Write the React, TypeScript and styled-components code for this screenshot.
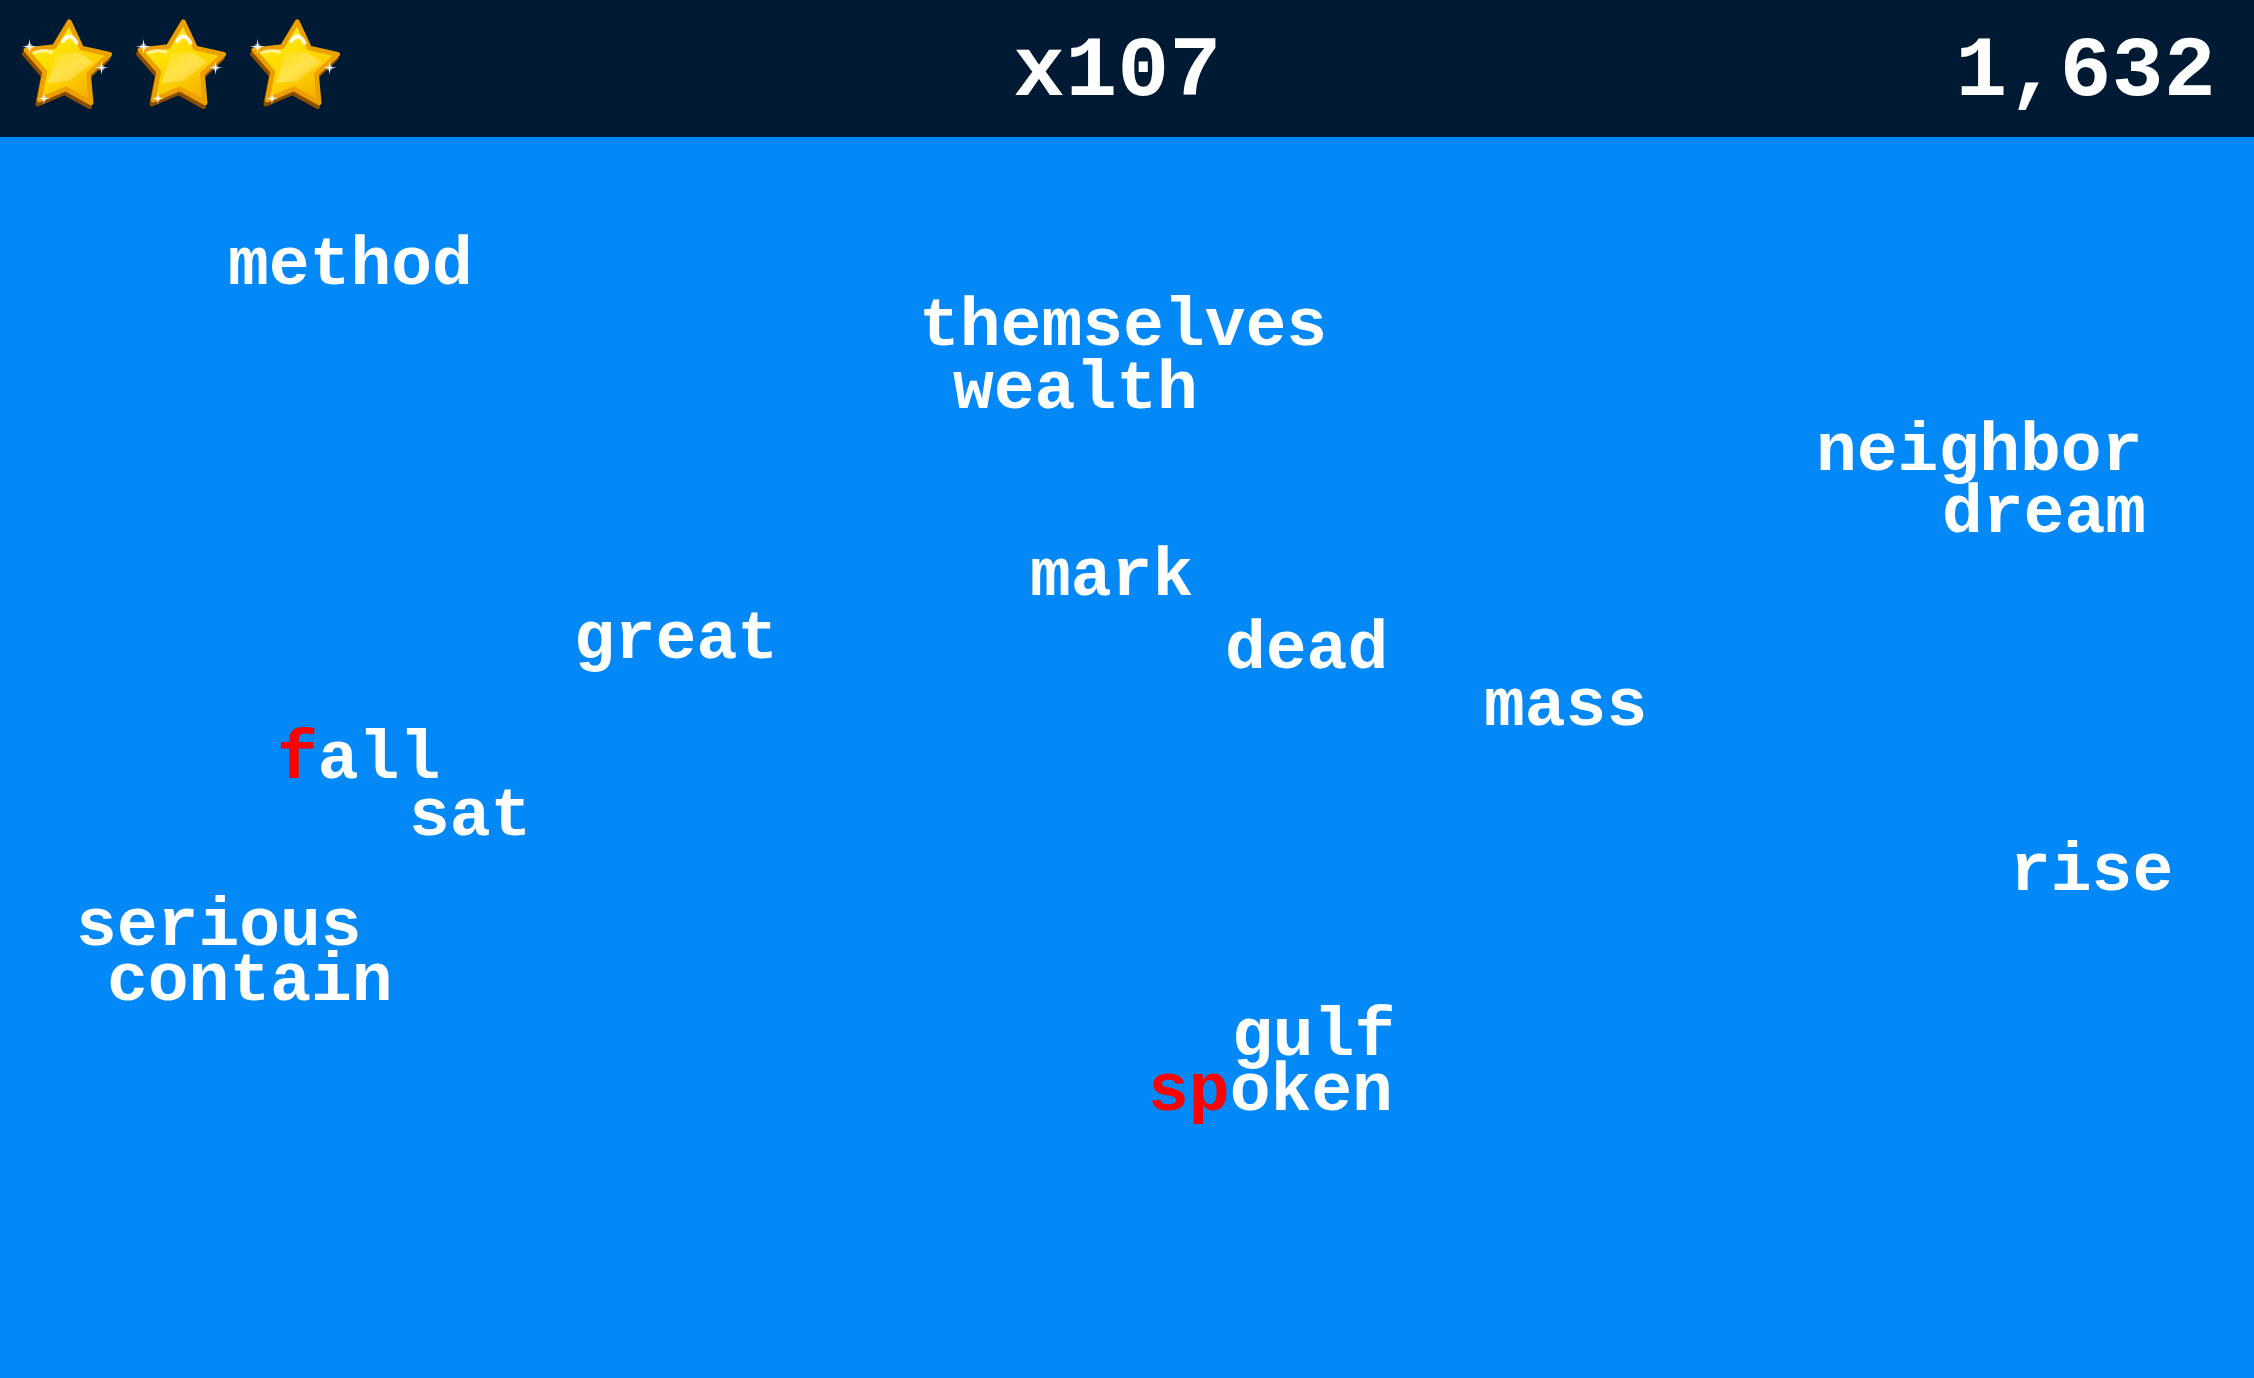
import React from "react";
import styled, { createGlobalStyle } from "styled-components";

const HEADER_H = 137;
const FONT = 68;
const LINE = 50;
const BASE = Math.round((LINE - FONT * 1.1325) / 2 + FONT * 0.8325);

const Global = createGlobalStyle`
  html, body { margin: 0; padding: 0; background: #0389f7; }
  body { overflow: hidden; }
  #root { width: 2254px; height: 1378px; }
`;

const Screen = styled.div`
  width: 2254px;
  height: 1378px;
  display: flex;
  flex-direction: column;
  background: #0389f7;
  font-family: "Liberation Mono", "Courier New", monospace;
`;

const TopBar = styled.header`
  height: ${HEADER_H}px;
  flex: none;
  background: #001a33;
  display: grid;
  grid-template-columns: 1fr auto 1fr;
  align-items: center;
  padding: 0 38px 0 19px;
  box-sizing: border-box;
`;

const Stars = styled.div`
  display: flex;
  gap: 18px;
  align-items: center;
  margin-top: -14px;
`;

const HudText = styled.div<{ $align: "center" | "right" }>`
  color: #ffffff;
  font-family: "Liberation Mono", "Courier New", monospace;
  font-weight: bold;
  font-size: 86px;
  line-height: 1;
  padding-top: 6px;
  text-align: ${(p) => p.$align};
  letter-spacing: 0.5px;
`;

const Field = styled.main`
  position: relative;
  flex: 1;
  overflow: hidden;
`;

const Word = styled.span<{ $x: number; $y: number }>`
  position: absolute;
  left: ${(p) => p.$x}px;
  top: ${(p) => p.$y - HEADER_H - BASE}px;
  color: #ffffff;
  font-family: "Liberation Mono", "Courier New", monospace;
  font-weight: bold;
  font-size: ${FONT}px;
  line-height: ${LINE}px;
  white-space: pre;
`;

const Typed = styled.span`
  color: #ff0000;
`;

const StarPts =
  "52.4,8.1 65.1,35.4 94.4,42.1 72.4,62.6 75.1,92.6 48.7,78 21.1,89.7 26.8,60.2 7.1,37.5 36.9,33.9";

const Sparkle = ({ x, y, s }: { x: number; y: number; s: number }) => (
  <g transform={`translate(${x} ${y}) scale(${s})`}>
    <circle r="3.4" fill="#ffffff" opacity="0.4" />
    <path
      d="M0,-8 L1,-1 L8,0 L1,1 L0,8 L-1,1 L-8,0 L-1,-1 Z"
      fill="#ffffff"
    />
  </g>
);

const GoldStar = () => (
  <svg width="96" height="96" viewBox="0 0 100 100">
    <defs>
      <linearGradient id="face" x1="0.2" y1="0" x2="0.8" y2="1">
        <stop offset="0" stopColor="#fff36a" />
        <stop offset="0.35" stopColor="#ffdf00" />
        <stop offset="0.6" stopColor="#ffd200" />
        <stop offset="1" stopColor="#f2a600" />
      </linearGradient>
      <linearGradient id="edge" x1="0" y1="0" x2="0" y2="1">
        <stop offset="0" stopColor="#d88a00" />
        <stop offset="1" stopColor="#9a5a00" />
      </linearGradient>
      <linearGradient id="band" x1="0" y1="0" x2="1" y2="1">
        <stop offset="0" stopColor="#ffffff" stopOpacity="0" />
        <stop offset="0.5" stopColor="#fff7b0" stopOpacity="0.6" />
        <stop offset="1" stopColor="#ffffff" stopOpacity="0" />
      </linearGradient>
    </defs>
    <polygon
      points={StarPts}
      transform="translate(-1.5 4)"
      fill="url(#edge)"
      stroke="#8a4e00"
      strokeWidth="5"
      strokeLinejoin="round"
    />
    <polygon
      points={StarPts}
      fill="url(#face)"
      stroke="#eba000"
      strokeWidth="5"
      strokeLinejoin="round"
    />
    <polygon
      points="40,40 62,40 78,50 52,70 30,72"
      fill="url(#band)"
      opacity="0.7"
    />
    <path
      d="M46,28 Q54,18 60,30"
      stroke="#ffffff"
      strokeWidth="4"
      strokeLinecap="round"
      fill="none"
      opacity="0.85"
    />
    <path
      d="M16,40 Q26,36 34,40"
      stroke="#fffbd0"
      strokeWidth="3"
      strokeLinecap="round"
      fill="none"
      opacity="0.7"
    />
    <Sparkle x={11} y={34} s={1} />
    <Sparkle x={86} y={56} s={0.9} />
    <Sparkle x={26} y={88} s={0.8} />
  </svg>
);

type W = { text: string; typed?: number; x: number; y: number };

const words: W[] = [
  { text: "method", x: 228, y: 284 },
  { text: "themselves", x: 919, y: 345 },
  { text: "wealth", x: 953, y: 408 },
  { text: "neighbor", x: 1816, y: 470 },
  { text: "dream", x: 1942, y: 532 },
  { text: "mark", x: 1030, y: 595 },
  { text: "great", x: 574, y: 658 },
  { text: "dead", x: 1225, y: 668 },
  { text: "mass", x: 1484, y: 725 },
  { text: "fall", typed: 1, x: 277, y: 778 },
  { text: "sat", x: 409, y: 835 },
  { text: "rise", x: 2010, y: 890 },
  { text: "serious", x: 76, y: 945 },
  { text: "contain", x: 107, y: 1000 },
  { text: "gulf", x: 1232, y: 1055 },
  { text: "spoken", typed: 2, x: 1148, y: 1110 },
];

export default function App() {
  return (
    <>
      <Global />
      <Screen>
        <TopBar>
          <Stars>
            <GoldStar />
            <GoldStar />
            <GoldStar />
          </Stars>
          <HudText $align="center">x107</HudText>
          <HudText $align="right">1,632</HudText>
        </TopBar>
        <Field>
          {words.map((w) => (
            <Word key={w.text} $x={w.x} $y={w.y}>
              {w.typed ? <Typed>{w.text.slice(0, w.typed)}</Typed> : null}
              {w.text.slice(w.typed ?? 0)}
            </Word>
          ))}
        </Field>
      </Screen>
    </>
  );
}
